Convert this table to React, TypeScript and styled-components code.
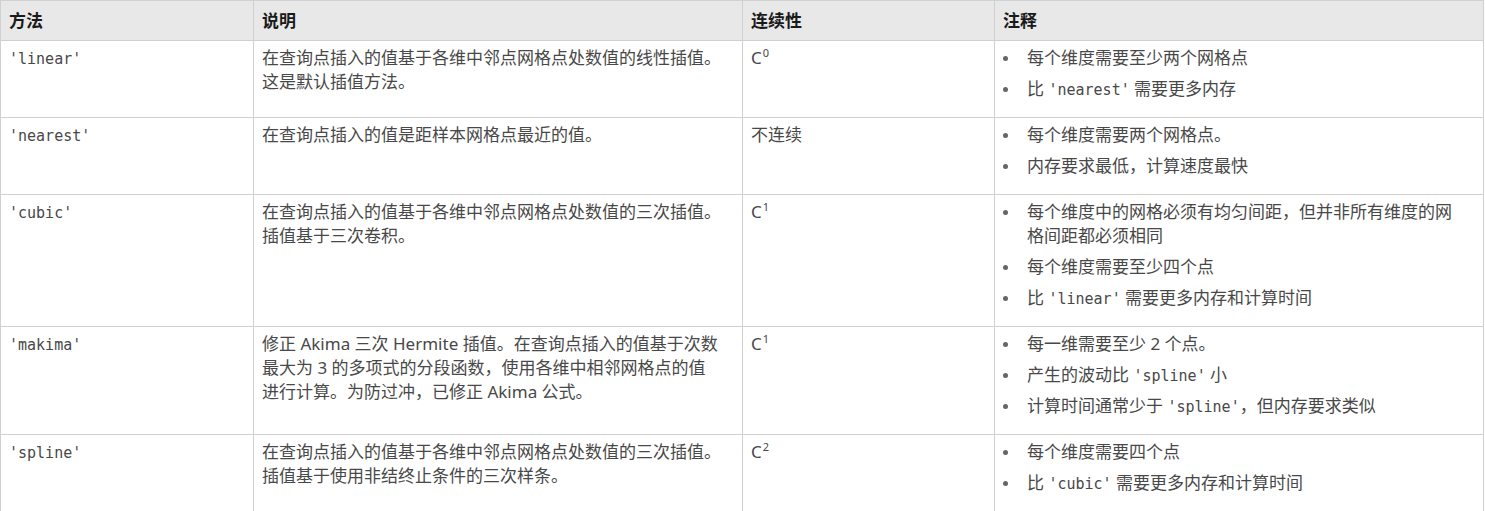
import React from 'react';
import styled, { createGlobalStyle } from 'styled-components';

const GlobalStyle = createGlobalStyle`
  html, body {
    margin: 0;
    padding: 0;
    background: #fff;
  }
  body {
    font-family: "Noto Sans", "Noto Sans CJK SC", sans-serif;
  }
`;

const Table = styled.div`
  display: grid;
  grid-template-columns: 253px 489px 252px 489px;
  width: fit-content;
  border-top: 1px solid #d0d0d0;
  border-left: 1px solid #d0d0d0;
`;

const HeadCell = styled.div`
  box-sizing: border-box;
  background: #e8e8e8;
  border-right: 1px solid #d0d0d0;
  border-bottom: 1px solid #d0d0d0;
  padding: 8px 8px 7px;
  font-size: 17px;
  font-weight: 700;
  line-height: 24px;
  color: #1a1a1a;
`;

const Cell = styled.div<{ $wide?: boolean }>`
  box-sizing: border-box;
  border-right: 1px solid #d0d0d0;
  border-bottom: 1px solid #d0d0d0;
  padding: 5px ${(p) => (p.$wide ? 16 : 12)}px 9px 8px;
  font-size: 17px;
  line-height: 24px;
  color: #484848;
`;

const Code = styled.code`
  font-family: "DejaVu Sans Mono", "Liberation Mono", monospace;
  font-size: 15px;
  line-height: 0;
  color: #484848;
`;

const Sup = styled.sup`
  font-size: 11px;
  line-height: 0;
  vertical-align: 7px;
  margin-left: 1px;
`;

const NoteList = styled.ul`
  margin: 0;
  padding: 0;
  list-style: none;
`;

const NoteItem = styled.li`
  display: flex;
  align-items: flex-start;
  margin-bottom: 7px;
`;

const Dot = styled.span`
  flex: none;
  width: 5px;
  height: 5px;
  border-radius: 50%;
  background: #666;
  margin: 10px 19px 0 0;
`;

type Row = {
  method: string;
  desc: React.ReactNode;
  cont: React.ReactNode;
  notes: React.ReactNode[];
};

const rows: Row[] = [
  {
    method: "'linear'",
    desc: '在查询点插入的值基于各维中邻点网格点处数值的线性插值。这是默认插值方法。',
    cont: <>C<Sup>0</Sup></>,
    notes: ['每个维度需要至少两个网格点', <>比 <Code>'nearest'</Code> 需要更多内存</>],
  },
  {
    method: "'nearest'",
    desc: '在查询点插入的值是距样本网格点最近的值。',
    cont: '不连续',
    notes: ['每个维度需要两个网格点。', '内存要求最低，计算速度最快'],
  },
  {
    method: "'cubic'",
    desc: '在查询点插入的值基于各维中邻点网格点处数值的三次插值。插值基于三次卷积。',
    cont: <>C<Sup>1</Sup></>,
    notes: [
      '每个维度中的网格必须有均匀间距，但并非所有维度的网格间距都必须相同',
      '每个维度需要至少四个点',
      <>比 <Code>'linear'</Code> 需要更多内存和计算时间</>,
    ],
  },
  {
    method: "'makima'",
    desc: (
      <>
        修正 Akima 三次 Hermite 插值。在查询点插入的值基于次数最大为 3 的多项式的分段函数，使用各维中相邻网格点的值
        <br />
        进行计算。为防过冲，已修正 Akima 公式。
      </>
    ),
    cont: <>C<Sup>1</Sup></>,
    notes: [
      '每一维需要至少 2 个点。',
      <>产生的波动比 <Code>'spline'</Code> 小</>,
      <>计算时间通常少于 <Code>'spline'</Code>，但内存要求类似</>,
    ],
  },
  {
    method: "'spline'",
    desc: '在查询点插入的值基于各维中邻点网格点处数值的三次插值。插值基于使用非结终止条件的三次样条。',
    cont: <>C<Sup>2</Sup></>,
    notes: ['每个维度需要四个点', <>比 <Code>'cubic'</Code> 需要更多内存和计算时间</>],
  },
];

const App: React.FC = () => (
  <>
    <GlobalStyle />
    <Table>
      <HeadCell>方法</HeadCell>
      <HeadCell>说明</HeadCell>
      <HeadCell>连续性</HeadCell>
      <HeadCell>注释</HeadCell>
      {rows.map((row) => (
        <React.Fragment key={row.method}>
          <Cell>
            <Code>{row.method}</Code>
          </Cell>
          <Cell>{row.desc}</Cell>
          <Cell>{row.cont}</Cell>
          <Cell $wide>
            <NoteList>
              {row.notes.map((note, i) => (
                <NoteItem key={i}>
                  <Dot />
                  <span>{note}</span>
                </NoteItem>
              ))}
            </NoteList>
          </Cell>
        </React.Fragment>
      ))}
    </Table>
  </>
);

export default App;
